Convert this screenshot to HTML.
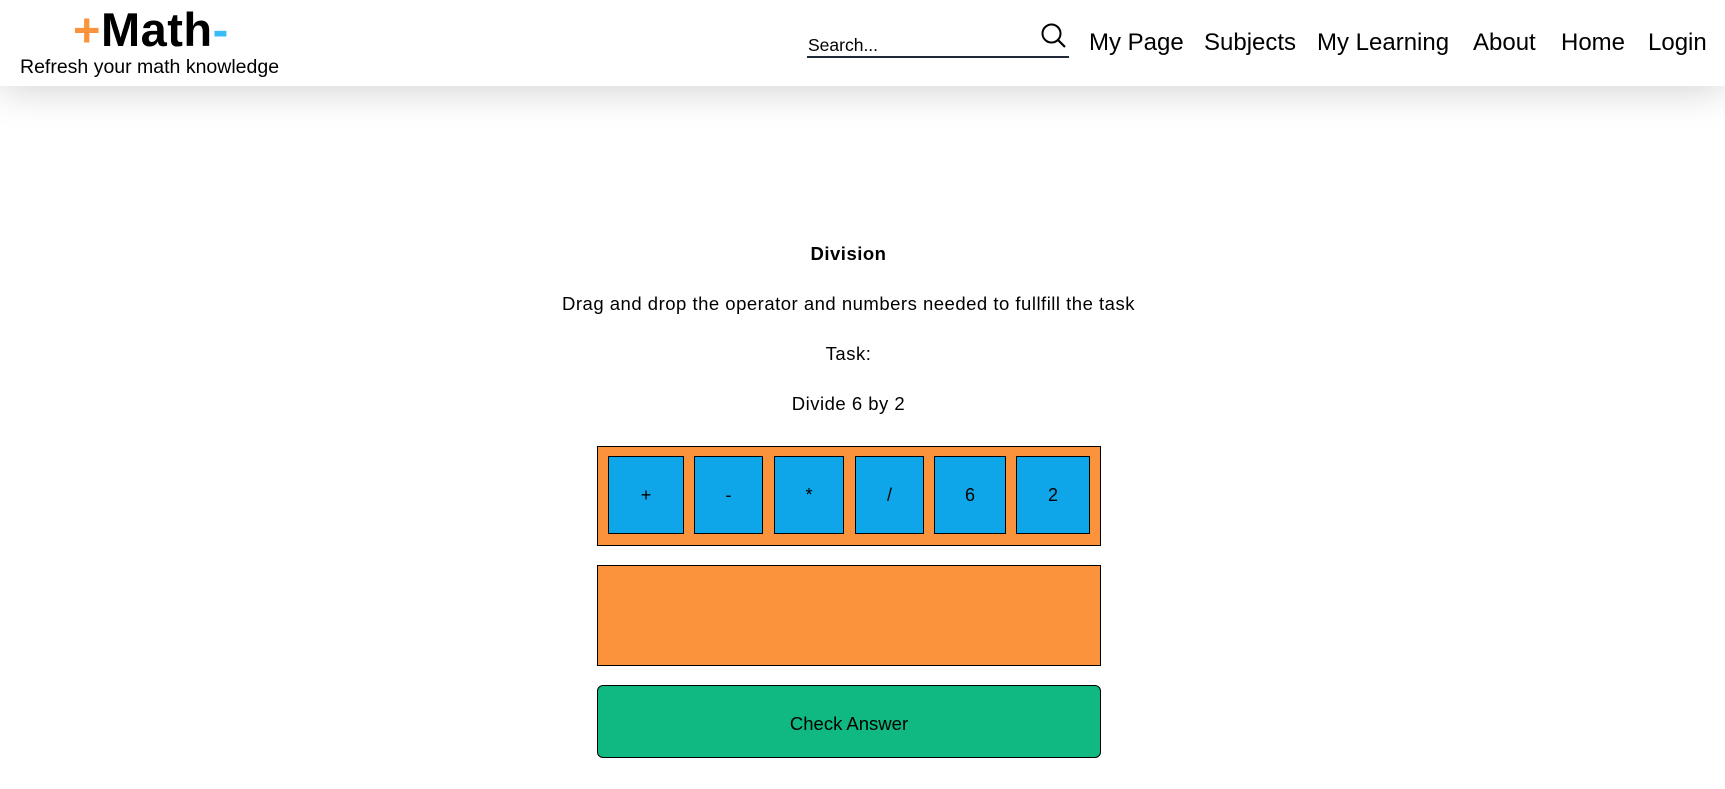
<!DOCTYPE html>
<html><head><meta charset="utf-8"><style>
*{margin:0;padding:0;box-sizing:border-box}
body{width:1725px;height:789px;background:#fff;font-family:"Liberation Sans",sans-serif;color:#000;position:relative;overflow:hidden}
.hdr{position:absolute;left:0;top:0;width:1725px;height:86px;background:#fff;box-shadow:0 4px 40px rgba(0,0,0,0.18);z-index:2}
.a{position:absolute;white-space:nowrap}
.nav{font-size:24px;top:29px}
.t{font-size:18.5px;left:0;width:1697px;text-align:center;letter-spacing:0.5px}
.tile{position:absolute;top:456px;height:78px;background:#0ea5e9;border:1px solid #000;font-size:18px;display:flex;align-items:center;justify-content:center}
</style></head><body>
<div class="hdr">
 <div class="a" style="left:73px;top:2px;font-size:47px;font-weight:bold;letter-spacing:0.5px"><span style="color:#fb923c">+</span>Math<span style="color:#38bdf8">-</span></div>
 <div class="a" style="left:20px;top:56px;font-size:19.5px">Refresh your math knowledge</div>
 <div class="a" style="left:808px;top:35px;font-size:17.5px">Search...</div>
 <div class="a" style="left:807px;top:56px;width:262px;height:2px;background:#1f2937"></div>
 <svg class="a" style="left:1040px;top:22px" width="28" height="28" viewBox="0 0 28 28"><circle cx="11.5" cy="11.5" r="9" fill="none" stroke="#000" stroke-width="2"/><line x1="18" y1="18" x2="25" y2="25" stroke="#000" stroke-width="2.2"/></svg>
 <div class="a nav" style="left:1089px">My Page</div>
 <div class="a nav" style="left:1204px">Subjects</div>
 <div class="a nav" style="left:1317px">My Learning</div>
 <div class="a nav" style="left:1473px">About</div>
 <div class="a nav" style="left:1561px">Home</div>
 <div class="a nav" style="left:1648px">Login</div>
</div>
<div class="a t" style="top:243px;font-weight:bold">Division</div>
<div class="a t" style="top:293px">Drag and drop the operator and numbers needed to fullfill the task</div>
<div class="a t" style="top:343px">Task:</div>
<div class="a t" style="top:393px">Divide 6 by 2</div>
<div class="a" style="left:597px;top:446px;width:504px;height:100px;background:#fb923c;border:1px solid #000"></div>
<div class="tile" style="left:608px;width:76px">+</div>
<div class="tile" style="left:694px;width:69px">-</div>
<div class="tile" style="left:774px;width:70px">*</div>
<div class="tile" style="left:855px;width:69px">/</div>
<div class="tile" style="left:934px;width:72px">6</div>
<div class="tile" style="left:1016px;width:74px">2</div>
<div class="a" style="left:597px;top:565px;width:504px;height:101px;background:#fb923c;border:1px solid #000"></div>
<div class="a" style="left:597px;top:685px;width:504px;height:73px;background:#10b981;border:1px solid #000;border-radius:6px;font-size:18.5px;display:flex;align-items:center;justify-content:center;padding-top:4px">Check Answer</div>
</body></html>
